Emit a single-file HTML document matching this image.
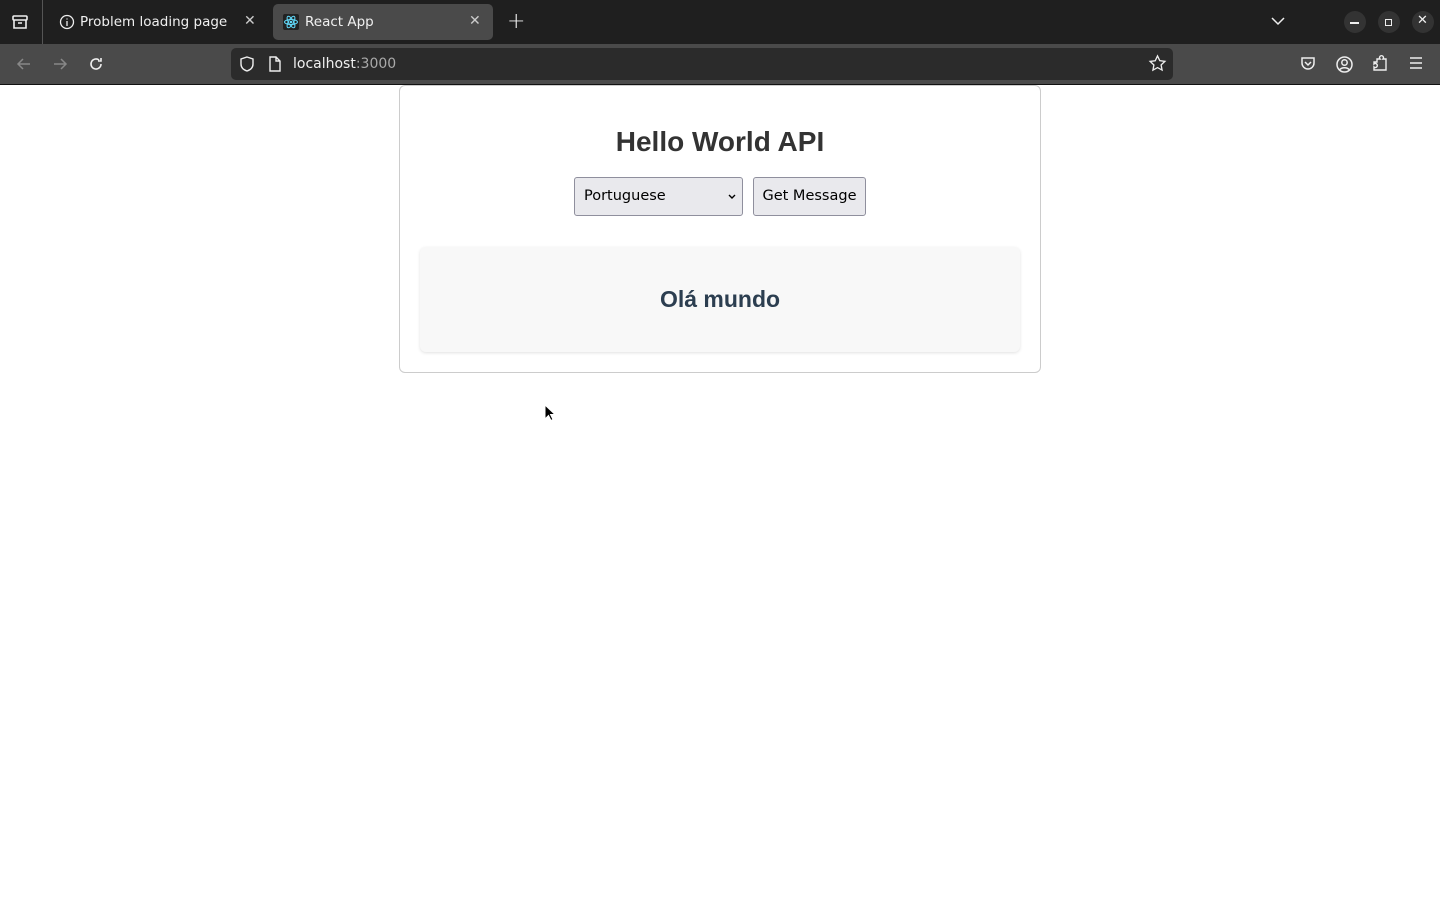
<!DOCTYPE html>
<html><head><meta charset="utf-8"><style>
*{box-sizing:border-box;margin:0;padding:0}
body{width:1440px;height:900px;overflow:hidden;background:#fff;font-family:"Liberation Sans",sans-serif;position:relative}
.tabbar{position:absolute;left:0;top:0;width:1440px;height:44px;background:#1f1f1f}
.toolbar{position:absolute;left:0;top:44px;width:1440px;height:41px;background:#4a4a4a;border-bottom:1px solid #111}
.t{position:absolute;color:#f0f0f0;font-family:"DejaVu Sans",sans-serif;font-size:13.5px}
svg{position:absolute}
.card{position:absolute;left:399px;top:85px;width:642px;height:288px;border:1px solid #ccc;border-radius:6px;background:#fff}
h1{position:absolute;left:0;width:100%;top:40px;text-align:center;font-size:28px;font-weight:bold;color:#333}
.sel,.btn{position:absolute;top:91px;height:39px;background:#e9e9ed;border:1px solid #8f8f9d;border-radius:3px;font-family:"DejaVu Sans",sans-serif;font-size:14.5px;color:#000;line-height:37px}
.msg{position:absolute;left:20px;top:161px;width:600px;height:105px;background:#f8f8f8;border-radius:6px;box-shadow:0 1px 3px rgba(0,0,0,.12);text-align:center;font-size:23px;font-weight:bold;color:#2c3e50;line-height:105px}
</style></head><body>
<div class="tabbar">
  <svg style="left:11px;top:13px" width="18" height="18" viewBox="0 0 18 18" fill="none" stroke="#eee" stroke-width="1.6"><rect x="2" y="3" width="14" height="4" rx="1"/><path d="M3 7v8h12V7M7 10h4"/></svg>
  <div style="position:absolute;left:42px;top:0;width:1px;height:44px;background:#555"></div>
  <svg style="left:59px;top:14px" width="16" height="16" viewBox="0 0 16 16" fill="none" stroke="#eee" stroke-width="1.3"><circle cx="8" cy="8" r="6.5"/><path d="M8 7v5M8 4.5v1"/></svg>
  <div class="t" style="left:80px;top:14px">Problem loading page</div>
  <div class="t" style="left:244px;top:13px;font-size:14px;color:#ccc">✕</div>
  <div style="position:absolute;left:273px;top:4px;width:220px;height:36px;background:#4a4a4a;border-radius:5px"></div>
  <svg style="left:283px;top:14px" width="16" height="16" viewBox="0 0 16 16"><rect width="16" height="16" rx="2" fill="#222"/><g fill="none" stroke="#61dafb" stroke-width="1"><ellipse cx="8" cy="8" rx="6.5" ry="2.5"/><ellipse cx="8" cy="8" rx="6.5" ry="2.5" transform="rotate(60 8 8)"/><ellipse cx="8" cy="8" rx="6.5" ry="2.5" transform="rotate(120 8 8)"/></g><circle cx="8" cy="8" r="1.3" fill="#61dafb"/></svg>
  <div class="t" style="left:305px;top:14px">React App</div>
  <div class="t" style="left:469px;top:13px;font-size:14px;color:#ccc">✕</div>
  <div class="t" style="left:507px;top:9px;font-size:22px;font-weight:300">+</div>
  <svg style="left:1270px;top:15px" width="16" height="12" viewBox="0 0 16 12" fill="none" stroke="#eee" stroke-width="1.5"><path d="M2 3l6 6 6-6"/></svg>
  <div style="position:absolute;left:1344px;top:11px;width:22px;height:22px;border-radius:50%;background:#333"></div>
  <div style="position:absolute;left:1350px;top:22px;width:9px;height:1.5px;background:#eee"></div>
  <div style="position:absolute;left:1378px;top:11px;width:22px;height:22px;border-radius:50%;background:#333"></div>
  <div style="position:absolute;left:1385px;top:19px;width:7px;height:7px;border:1.3px solid #eee"></div>
  <div style="position:absolute;left:1412px;top:11px;width:22px;height:22px;border-radius:50%;background:#333"></div>
  <div class="t" style="left:1417px;top:13px;font-size:13px;font-weight:bold">✕</div>
</div>
<div class="toolbar">
  <svg style="left:15px;top:11px" width="18" height="18" viewBox="0 0 18 18" fill="none" stroke="#888" stroke-width="1.5"><path d="M15 9H3M8 4L3 9l5 5"/></svg>
  <svg style="left:51px;top:11px" width="18" height="18" viewBox="0 0 18 18" fill="none" stroke="#888" stroke-width="1.5"><path d="M3 9h12M10 4l5 5-5 5"/></svg>
  <svg style="left:87px;top:11px" width="18" height="18" viewBox="0 0 18 18" fill="none" stroke="#eee" stroke-width="1.6"><path d="M14 9a5 5 0 1 1-2-4M14 3v3h-3"/></svg>
  <div style="position:absolute;left:231px;top:4px;width:942px;height:32px;background:#2b2b2b;border-radius:5px"></div>
  <svg style="left:238px;top:11px" width="18" height="18" viewBox="0 0 18 18" fill="none" stroke="#eee" stroke-width="1.4"><path d="M9 2l6 2v5c0 4-3 6-6 7-3-1-6-3-6-7V4z"/></svg>
  <svg style="left:267px;top:11px" width="16" height="18" viewBox="0 0 16 18" fill="none" stroke="#eee" stroke-width="1.4"><path d="M3 2h6l4 4v10H3zM9 2v4h4"/></svg>
  <div class="t" style="left:293px;top:12px;font-size:14px">localhost<span style="color:#aaa">:3000</span></div>
  <svg style="left:1148px;top:10px" width="19" height="19" viewBox="0 0 20 20" fill="none" stroke="#eee" stroke-width="1.4"><path d="M10 2l2.4 5 5.4.7-4 3.8 1 5.4L10 14.3 5.2 17l1-5.4-4-3.8 5.4-.7z"/></svg>
  <svg style="left:1299px;top:11px" width="18" height="18" viewBox="0 0 18 18" fill="none" stroke="#eee" stroke-width="1.5"><path d="M3 3h12v5a6 6 0 0 1-12 0z M6 7l3 3 3-3"/></svg>
  <svg style="left:1335px;top:11px" width="19" height="19" viewBox="0 0 19 19" fill="none" stroke="#eee" stroke-width="1.5"><circle cx="9.5" cy="9.5" r="7.5"/><circle cx="9.5" cy="7.5" r="2.7"/><path d="M4.5 15c2-3 8-3 10 0"/></svg>
  <svg style="left:1372px;top:10px" width="18" height="19" viewBox="0 0 18 19" fill="none" stroke="#eee" stroke-width="1.4"><path d="M2 8h3V5h3a2 2 0 1 1 3 0h3v11H2v-3a2 2 0 1 0 0-3z"/></svg>
  <svg style="left:1408px;top:11px" width="16" height="16" viewBox="0 0 16 16" stroke="#eee" stroke-width="1.5"><path d="M2 3h12M2 8h12M2 13h12"/></svg>
</div>
<div class="card">
  <h1>Hello World API</h1>
  <div class="sel" style="left:174px;width:169px;padding-left:9px">Portuguese
    <svg style="left:152px;top:15px" width="10" height="8" viewBox="0 0 10 8" fill="none" stroke="#000" stroke-width="1.4"><path d="M2 2l3 3 3-3"/></svg></div>
  <div class="btn" style="left:353px;width:113px;text-align:center">Get Message</div>
  <div class="msg">Olá mundo</div>
</div>
<svg style="left:544px;top:404px" width="12" height="18" viewBox="0 0 12 18"><path d="M1 1v14l3.5-3.5 2.5 5 2-1-2.5-5H11z" fill="#000" stroke="#fff" stroke-width="1"/></svg>
</body></html>
